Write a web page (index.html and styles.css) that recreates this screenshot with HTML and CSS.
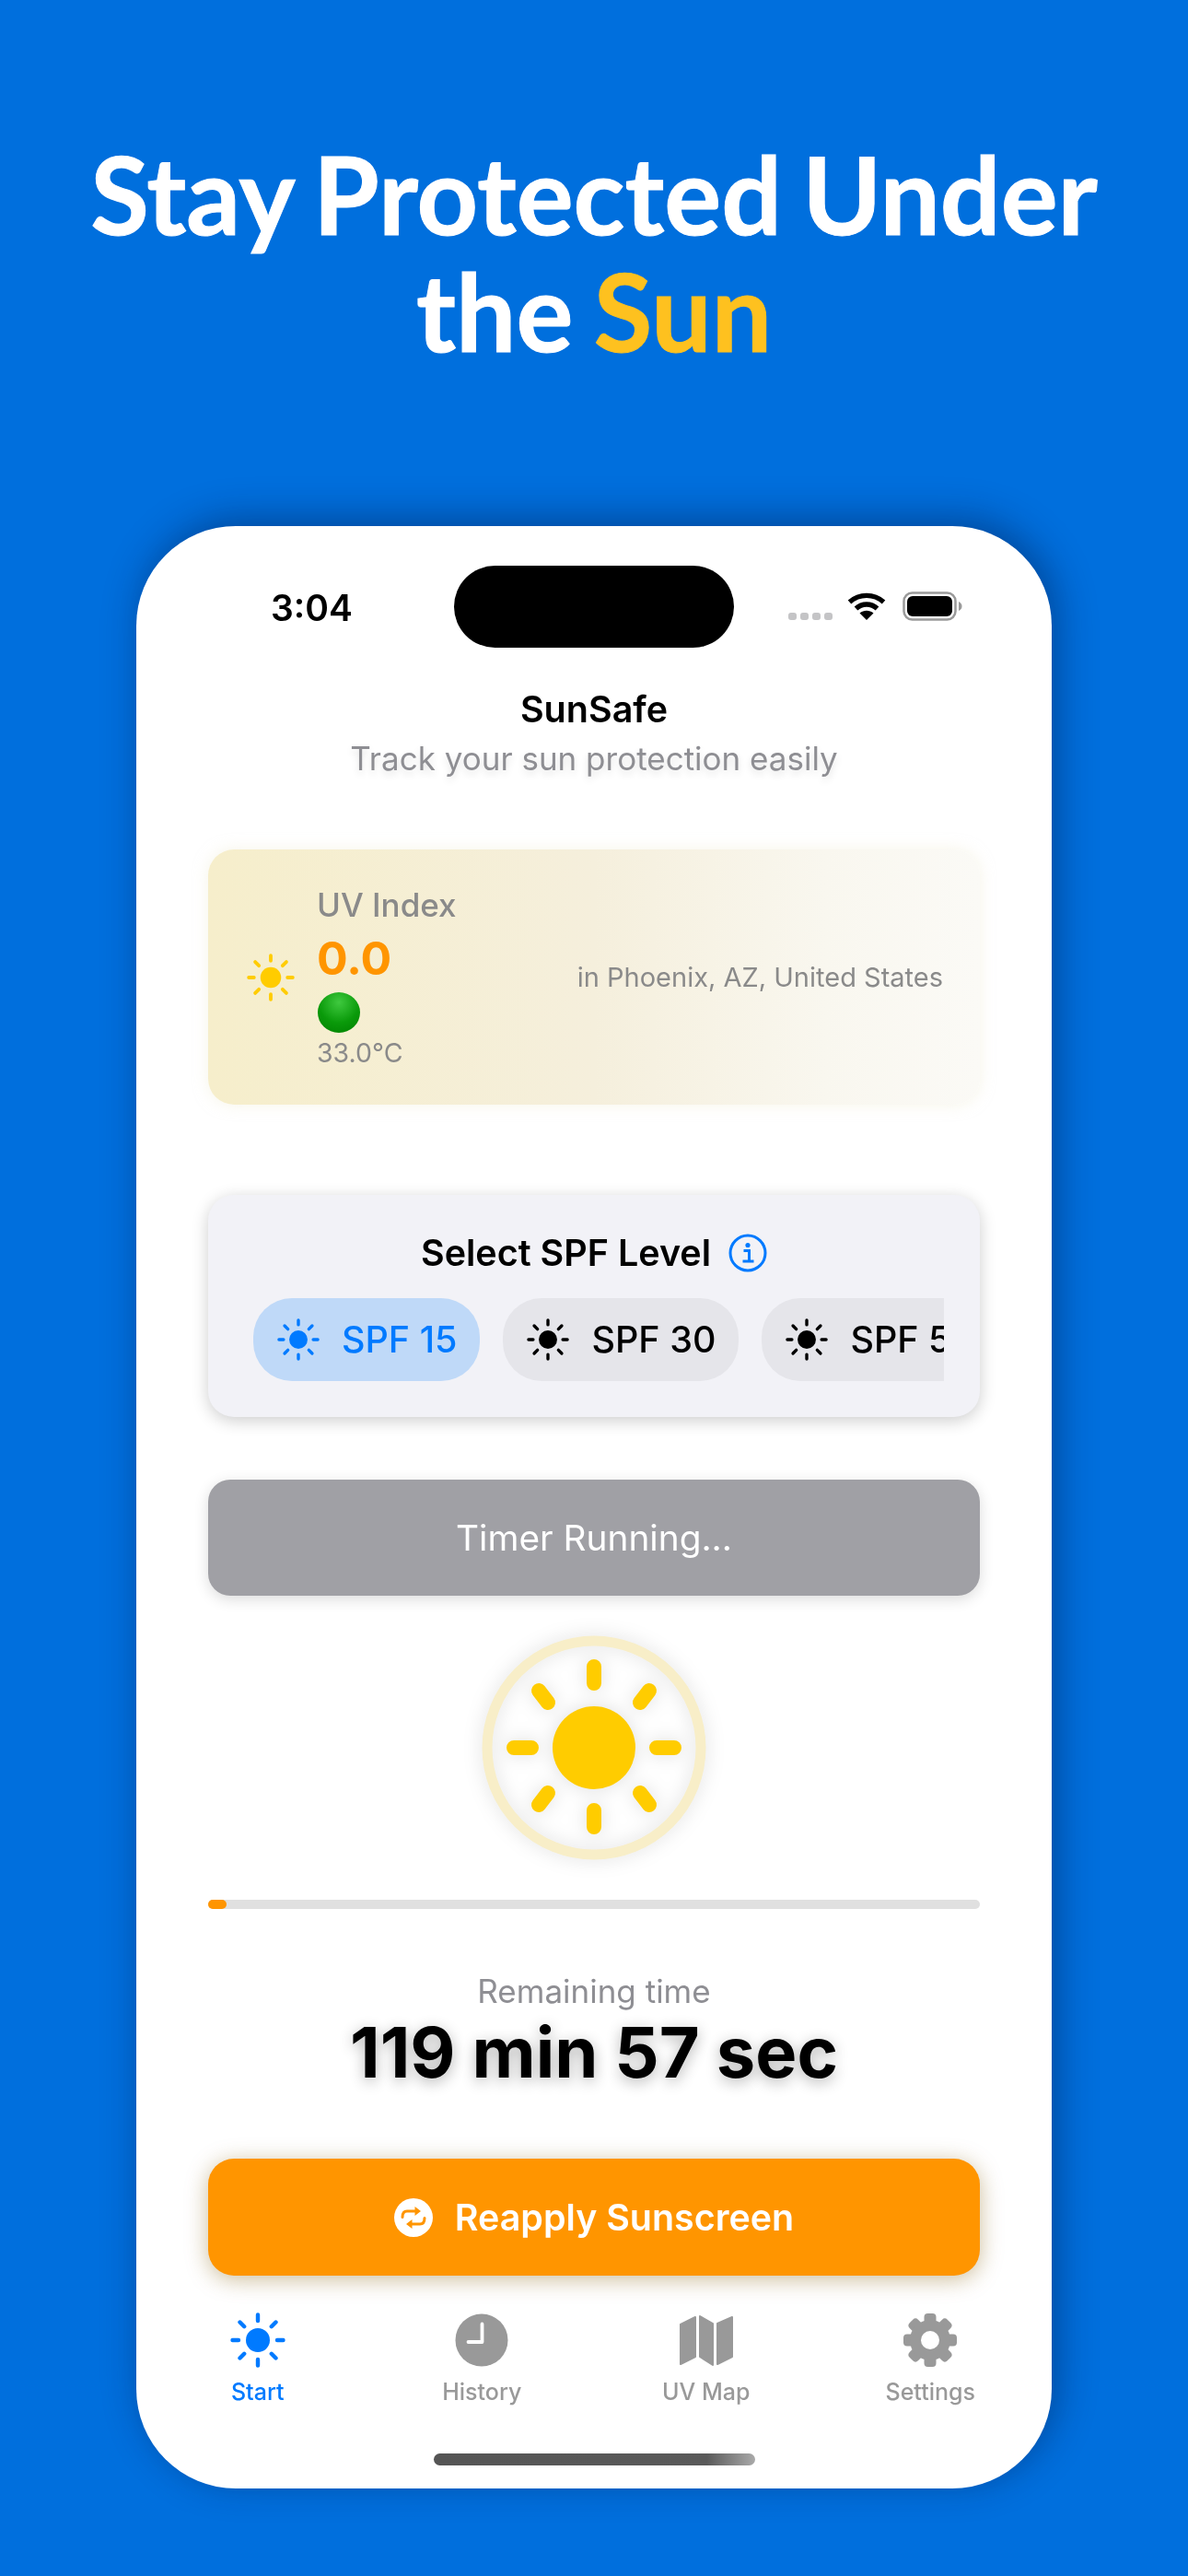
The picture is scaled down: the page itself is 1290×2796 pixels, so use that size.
FILE: index.html
```html
<!DOCTYPE html>
<html lang="en">
<head>
<meta charset="UTF-8" />
<title>SunSafe</title>
<link rel="stylesheet" href="styles.css">
</head>
<body>

<svg class="defs" width="0" height="0">
  <symbol id="sun" viewBox="0 0 60 60">
    <circle cx="30" cy="30" r="13" fill="currentColor" />
    <g stroke="currentColor" stroke-width="4.4" stroke-linecap="round">
      <path d="M30 2.500V9M30 51v6.500M2.500 30H9M51 30h6.500M10.500 10.500l4.700 4.700M44.800 44.800l4.700 4.700M10.500 49.500l4.700-4.700M44.800 15.200l4.700-4.700" />
    </g>
  </symbol>
</svg>

<h1 class="headline">Stay Protected Under<br>the <span class="accent">Sun</span></h1>

<div class="phone">
  <div class="status">
    <span class="time">3:04</span>
    <div class="island"></div>
    <div class="status-icons">
      <span class="dots"><i></i><i></i><i></i><i></i></span>
      <svg class="wifi" viewBox="0 0 42 30">
        <path d="M2.500 10.500C13 1 29 1 39.500 10.500" fill="none" stroke="#000" stroke-width="5.400" />
        <path d="M9.500 17.500C16 11.500 26 11.500 32.500 17.500" fill="none" stroke="#000" stroke-width="5.400" />
        <path d="M21 30L13.500 22.500C18 18.800 24 18.800 28.500 22.500Z" fill="#000" />
      </svg>
      <svg class="battery" viewBox="0 0 65 32">
        <rect x="1.500" y="1.500" width="56" height="29" rx="9" fill="none" stroke="#9a9a9a" stroke-width="2.500" />
        <rect x="5" y="5" width="49" height="22" rx="6" fill="#000" />
        <path d="M61 11c2.500 1 3.500 3 3.500 5s-1 4-3.500 5z" fill="#9a9a9a" />
      </svg>
    </div>
  </div>

  <div class="content">
    <div class="app-title">SunSafe</div>
    <div class="app-sub">Track your sun protection easily</div>

    <div class="uv-card">
      <svg class="uv-sun"><use href="#sun" /></svg>
      <div class="uv-info">
        <div class="uv-label">UV Index</div>
        <div class="uv-value">0.0</div>
        <div class="uv-ball"></div>
        <div class="uv-temp">33.0°C</div>
      </div>
      <div class="uv-place">in Phoenix, AZ, United States</div>
    </div>

    <div class="spf-card">
      <div class="spf-title">
        Select SPF Level
        <svg class="info" viewBox="0 0 42 42">
          <circle cx="21" cy="21" r="19" fill="none" stroke="#007aff" stroke-width="3" />
          <circle cx="21" cy="12.500" r="2.600" fill="#007aff" />
          <path d="M16.500 18.500H22.500V29.500M15.500 30H27.500" fill="none" stroke="#007aff" stroke-width="3" />
        </svg>
      </div>
      <div class="chips">
        <div class="chip selected"><svg class="chip-sun"><use href="#sun" /></svg>SPF 15</div>
        <div class="chip"><svg class="chip-sun"><use href="#sun" /></svg>SPF 30</div>
        <div class="chip"><svg class="chip-sun"><use href="#sun" /></svg>SPF 50</div>
      </div>
    </div>

    <div class="timer-btn">Timer Running...</div>

    <svg class="big-sun" viewBox="0 0 244 244">
      <g class="big-sun-art">
        <circle cx="122" cy="122" r="116" fill="none" stroke="#f8eec8" stroke-width="11" />
        <circle cx="122" cy="122" r="45" fill="#ffcc00" />
        <g stroke="#ffcc00" stroke-width="16" stroke-linecap="round">
          <path d="M122 34V52M122 190V208M35 122H54M190 122H209M62 60L72 73M172 171L182 184M62 184L72 171M172 73L182 60" />
        </g>
      </g>
    </svg>

    <div class="progress"><div class="progress-fill" style="width: 2.400%"></div></div>

    <div class="remain-label">Remaining time</div>
    <div class="remain-value">119 min 57 sec</div>

    <div class="reapply">
      <svg class="reapply-icon" viewBox="0 0 42 42">
        <circle cx="21" cy="21" r="21" fill="#fff" />
        <g fill="none" stroke="#ff9500" stroke-width="3" stroke-linecap="round">
          <path d="M9 20.500C9 16.500 10.500 14 14 14H23" />
          <path d="M33 21.500C33 25.500 31.500 28 28 28H19" />
        </g>
        <path d="M22.500 9L29 14L22.500 19ZM19.500 23L13 28L19.500 33Z" fill="#ff9500" />
      </svg>
      Reapply Sunscreen
    </div>
  </div>

  <div class="tabs">
    <div class="tab active">
      <svg class="tab-icon"><use href="#sun" /></svg>
      <span>Start</span>
    </div>
    <div class="tab">
      <svg class="tab-icon" viewBox="0 0 60 60">
        <circle cx="30" cy="30" r="28.500" fill="#999" />
        <path d="M30.500 12.500V32H15.500" fill="none" stroke="#fff" stroke-width="3.800" stroke-linecap="round" stroke-linejoin="round" />
      </svg>
      <span>History</span>
    </div>
    <div class="tab">
      <svg class="tab-icon" viewBox="0 0 60 60">
        <g fill="#999" stroke="#999" stroke-width="2" stroke-linejoin="round">
          <path d="M2 13L18 5V48L2 56Z" />
          <path d="M23 4L37 12V57L23 48Z" />
          <path d="M42 12L58 5V48L42 56Z" />
        </g>
      </svg>
      <span>UV Map</span>
    </div>
    <div class="tab">
      <svg class="tab-icon" viewBox="0 0 60 60">
        <g fill="#999">
          <rect x="23.500" y="1" width="13" height="58" rx="4" />
          <rect x="23.500" y="1" width="13" height="58" rx="4" transform="rotate(45 30 30)" />
          <rect x="23.500" y="1" width="13" height="58" rx="4" transform="rotate(90 30 30)" />
          <rect x="23.500" y="1" width="13" height="58" rx="4" transform="rotate(135 30 30)" />
          <circle cx="30" cy="30" r="22" />
        </g>
        <circle cx="30" cy="30" r="10" fill="#fff" />
      </svg>
      <span>Settings</span>
    </div>
  </div>

  <div class="home-bar"></div>
</div>

</body>
</html>
```

FILE: styles.css
```css
* { box-sizing: border-box; }
html, body { margin: 0; height: 2796px; overflow: hidden; }
body { background: #006fdd; font-family: Inter, "Noto Sans", sans-serif; color: #000; }
.defs { display: block; }

.headline { margin: 0; padding-top: 147px; height: 571px; text-align: center; font-family: Lato, sans-serif; font-weight: 700; font-size: 116px; line-height: 127px; word-spacing: -6px; color: #fff; -webkit-text-stroke: 1px currentColor; }
.accent { color: #fec11f; }

.phone { width: 994px; height: 2130px; margin: 0 auto; background: #fff; border-radius: 108px; box-shadow: 6px -8px 42px rgba(0, 25, 70, 0.45); }

.status, .content, .tabs, .home-bar { filter: blur(0.5px); }

.status { display: flex; align-items: center; height: 132px; padding: 43px 96px 0 146px; }
.time { width: 199px; margin-top: 2px; font-size: 39px; font-weight: 600; }
.island { width: 304px; height: 89px; background: #000; border-radius: 45px; }
.status-icons { display: flex; align-items: center; margin-left: 59px; }
.dots { display: flex; gap: 4px; width: 48px; margin-top: 20px; }
.dots i { width: 9px; height: 8px; border-radius: 3px; background: #c4c4c6; }
.wifi { width: 42px; height: 30px; margin-left: 16px; margin-top: -2px; }
.battery { width: 65px; height: 32px; margin-left: 18px; margin-top: -2px; }

.content { padding: 44px 78px 0; }
.app-title { font-size: 39.500px; line-height: 46px; font-weight: 600; text-align: center; }
.app-sub { margin-top: 8px; font-size: 35px; line-height: 44px; color: #8e8e93; text-align: center; text-shadow: 0 4px 8px rgba(0, 0, 0, 0.12); }

.uv-card { display: flex; align-items: center; height: 277px; margin-top: 77px; padding: 0 40px 0 42px; border-radius: 28px; background: linear-gradient(90deg, #f6eecb, #f5efdc 50%, #f9f7ef 80%, #fbfaf6 100%); box-shadow: 0 0 16px rgba(240, 235, 210, 0.5); }
.uv-sun { width: 52px; height: 52px; color: #ffcc00; flex: none; }
.uv-info { margin-left: 24px; flex: 1; }
.uv-label { font-size: 35px; line-height: 40px; font-weight: 500; color: #8a8a8a; }
.uv-value { margin-top: 9px; font-size: 50px; line-height: 58px; font-weight: 700; color: #ff9500; }
.uv-ball { width: 46px; height: 44px; margin: 8px 0 0 1px; border-radius: 50%; background: radial-gradient(circle at 50% 25%, #3fc93f, #0a9a0a 55%, #007f00); }
.uv-temp { margin-top: 5px; font-size: 28.500px; line-height: 34px; color: #8a8a8a; }
.uv-place { font-size: 29px; color: #8a8a8a; }

.spf-card { height: 241px; margin-top: 98px; padding: 40px 39px 0 49px; background: #f2f2f7; border-radius: 28px; box-shadow: 0 4px 18px rgba(0, 0, 0, 0.2); }
.spf-title { display: flex; align-items: center; justify-content: center; gap: 19px; height: 46px; padding-right: 10px; font-size: 39.500px; font-weight: 600; }
.info { width: 42px; height: 42px; }
.chips { display: flex; gap: 25px; margin-top: 26px; overflow: hidden; }
.chip { display: flex; align-items: center; flex: none; height: 90px; padding: 0 25px 0 26px; gap: 24px; border-radius: 42px; background: #e5e5ea; font-size: 39.500px; font-weight: 500; }
.chip.selected { background: #bfd9f8; color: #007aff; }
.chip-sun { width: 46px; height: 46px; }

.timer-btn { height: 126px; margin-top: 68px; background: #a0a0a5; border-radius: 24px; color: #fff; font-size: 38.800px; line-height: 126px; text-align: center; box-shadow: 0 4px 16px rgba(0, 0, 0, 0.14); }

.big-sun { display: block; width: 244px; height: 244px; margin: 43px auto 0; overflow: visible; }
.big-sun-art { filter: drop-shadow(0 0 10px rgba(0, 0, 0, 0.13)); }

.progress { height: 10px; margin-top: 43px; border-radius: 5px; background: #e0e0e0; }
.progress-fill { height: 100%; border-radius: 5px; background: #ff9500; }

.remain-label { margin-top: 68px; font-size: 35px; line-height: 42px; color: #8e8e93; text-align: center; }
.remain-value { margin-top: 3px; font-size: 75.800px; line-height: 86px; font-weight: 700; text-align: center; text-shadow: 0 4px 16px rgba(0, 0, 0, 0.3); }

.reapply { display: flex; align-items: center; justify-content: center; gap: 24px; height: 127px; margin-top: 72px; background: #ff9500; border-radius: 28px; color: #fff; font-size: 39.400px; font-weight: 600; box-shadow: 0 4px 24px rgba(130, 90, 0, 0.4); }
.reapply-icon { width: 42px; height: 42px; }

.tabs { display: grid; grid-template-columns: repeat(4, 243.500px); justify-content: center; margin-top: 40px; }
.tab { display: flex; flex-direction: column; align-items: center; color: #999; font-size: 25px; font-weight: 500; }
.tab.active { color: #007aff; }
.tab-icon { width: 60px; height: 60px; margin-bottom: 11px; }

.home-bar { width: 349px; height: 13px; margin: 52px auto 0; border-radius: 7px; background: linear-gradient(90deg, #555, #5a5a5a 85%, #aaa); }
```
